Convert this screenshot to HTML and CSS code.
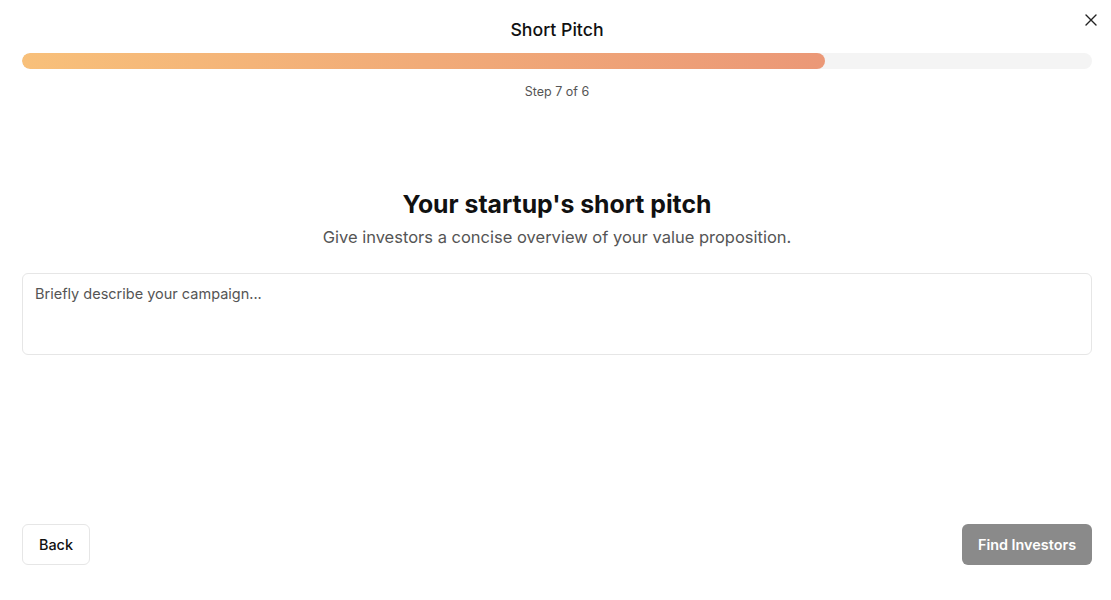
FILE: index.html
```html
<!DOCTYPE html>
<html>
<head>
<meta charset="utf-8">
<link rel="stylesheet" href="styles.css">
</head>
<body>
<div class="modal">
  <header class="header">
    <h1 class="title">Short Pitch</h1>
    <button class="close" aria-label="Close">
      <svg width="12" height="12" viewBox="0 0 12 12"><path d="M1 1L11 11M11 1L1 11" stroke="#222" stroke-width="1.4" stroke-linecap="round"/></svg>
    </button>
  </header>
  <div class="progress"><div class="fill" style="width:75%"></div></div>
  <p class="step">Step 7 of 6</p>
  <main class="body">
    <h2 class="heading">Your startup's short pitch</h2>
    <p class="sub">Give investors a concise overview of your value proposition.</p>
    <textarea class="input" placeholder="Briefly describe your campaign..."></textarea>
  </main>
  <footer class="footer">
    <button class="btn back">Back</button>
    <button class="btn primary">Find Investors</button>
  </footer>
</div>
</body>
</html>
```
FILE: styles.css
```css
* { box-sizing: border-box; }
html, body { margin: 0; padding: 0; background: #fff; }
body { font-family: Inter, "Noto Sans", sans-serif; color: #111; }
.modal { width: 1111px; height: 600px; padding: 0 19px 0 22px; display: flex; flex-direction: column; }
.header { position: relative; display: flex; justify-content: center; padding-top: 18px; height: 53px; }
.title { margin: 0; font-size: 17.7px; font-weight: 500; line-height: 24px; color: #111; }
.close { position: absolute; right: -6px; top: 13px; border: 0; background: none; padding: 0; width: 14px; height: 14px; display: flex; align-items: center; justify-content: center; cursor: pointer; }
.progress { height: 16px; border-radius: 8px; background: #f4f4f4; overflow: hidden; }
.fill { height: 100%; border-radius: 8px; background: linear-gradient(90deg, #f8c07a 0%, #f1ab78 50%, #eb9877 100%); }
.step { margin: 15px 0 0; text-align: center; font-size: 12.5px; line-height: 16px; color: #555; }
.body { display: flex; flex-direction: column; align-items: center; padding-top: 89px; }
.heading { margin: 0; font-size: 24.8px; line-height: 30px; font-weight: 700; color: #111; }
.sub { margin: 8px 0 0; font-size: 16.5px; line-height: 20px; color: #555; }
.input { margin-top: 26px; width: 100%; height: 82px; border: 1px solid #e6e6e6; border-radius: 6px; padding: 11px 12px; font-family: inherit; font-size: 14.5px; line-height: 18px; resize: none; outline: none; color: #111; }
.input::placeholder { color: #555; }
.footer { margin-top: auto; margin-bottom: 35px; display: flex; justify-content: space-between; }
.btn { height: 41px; border-radius: 6px; font-family: inherit; font-size: 14.4px; padding: 0 16px; cursor: pointer; }
.back { border: 1px solid #e6e6e6; background: #fff; color: #111; font-weight: 500; width: 68px; padding: 0; }
.primary { border: 0; background: #8a8a8a; color: #fff; font-weight: 600; width: 130px; padding: 0; }
```
